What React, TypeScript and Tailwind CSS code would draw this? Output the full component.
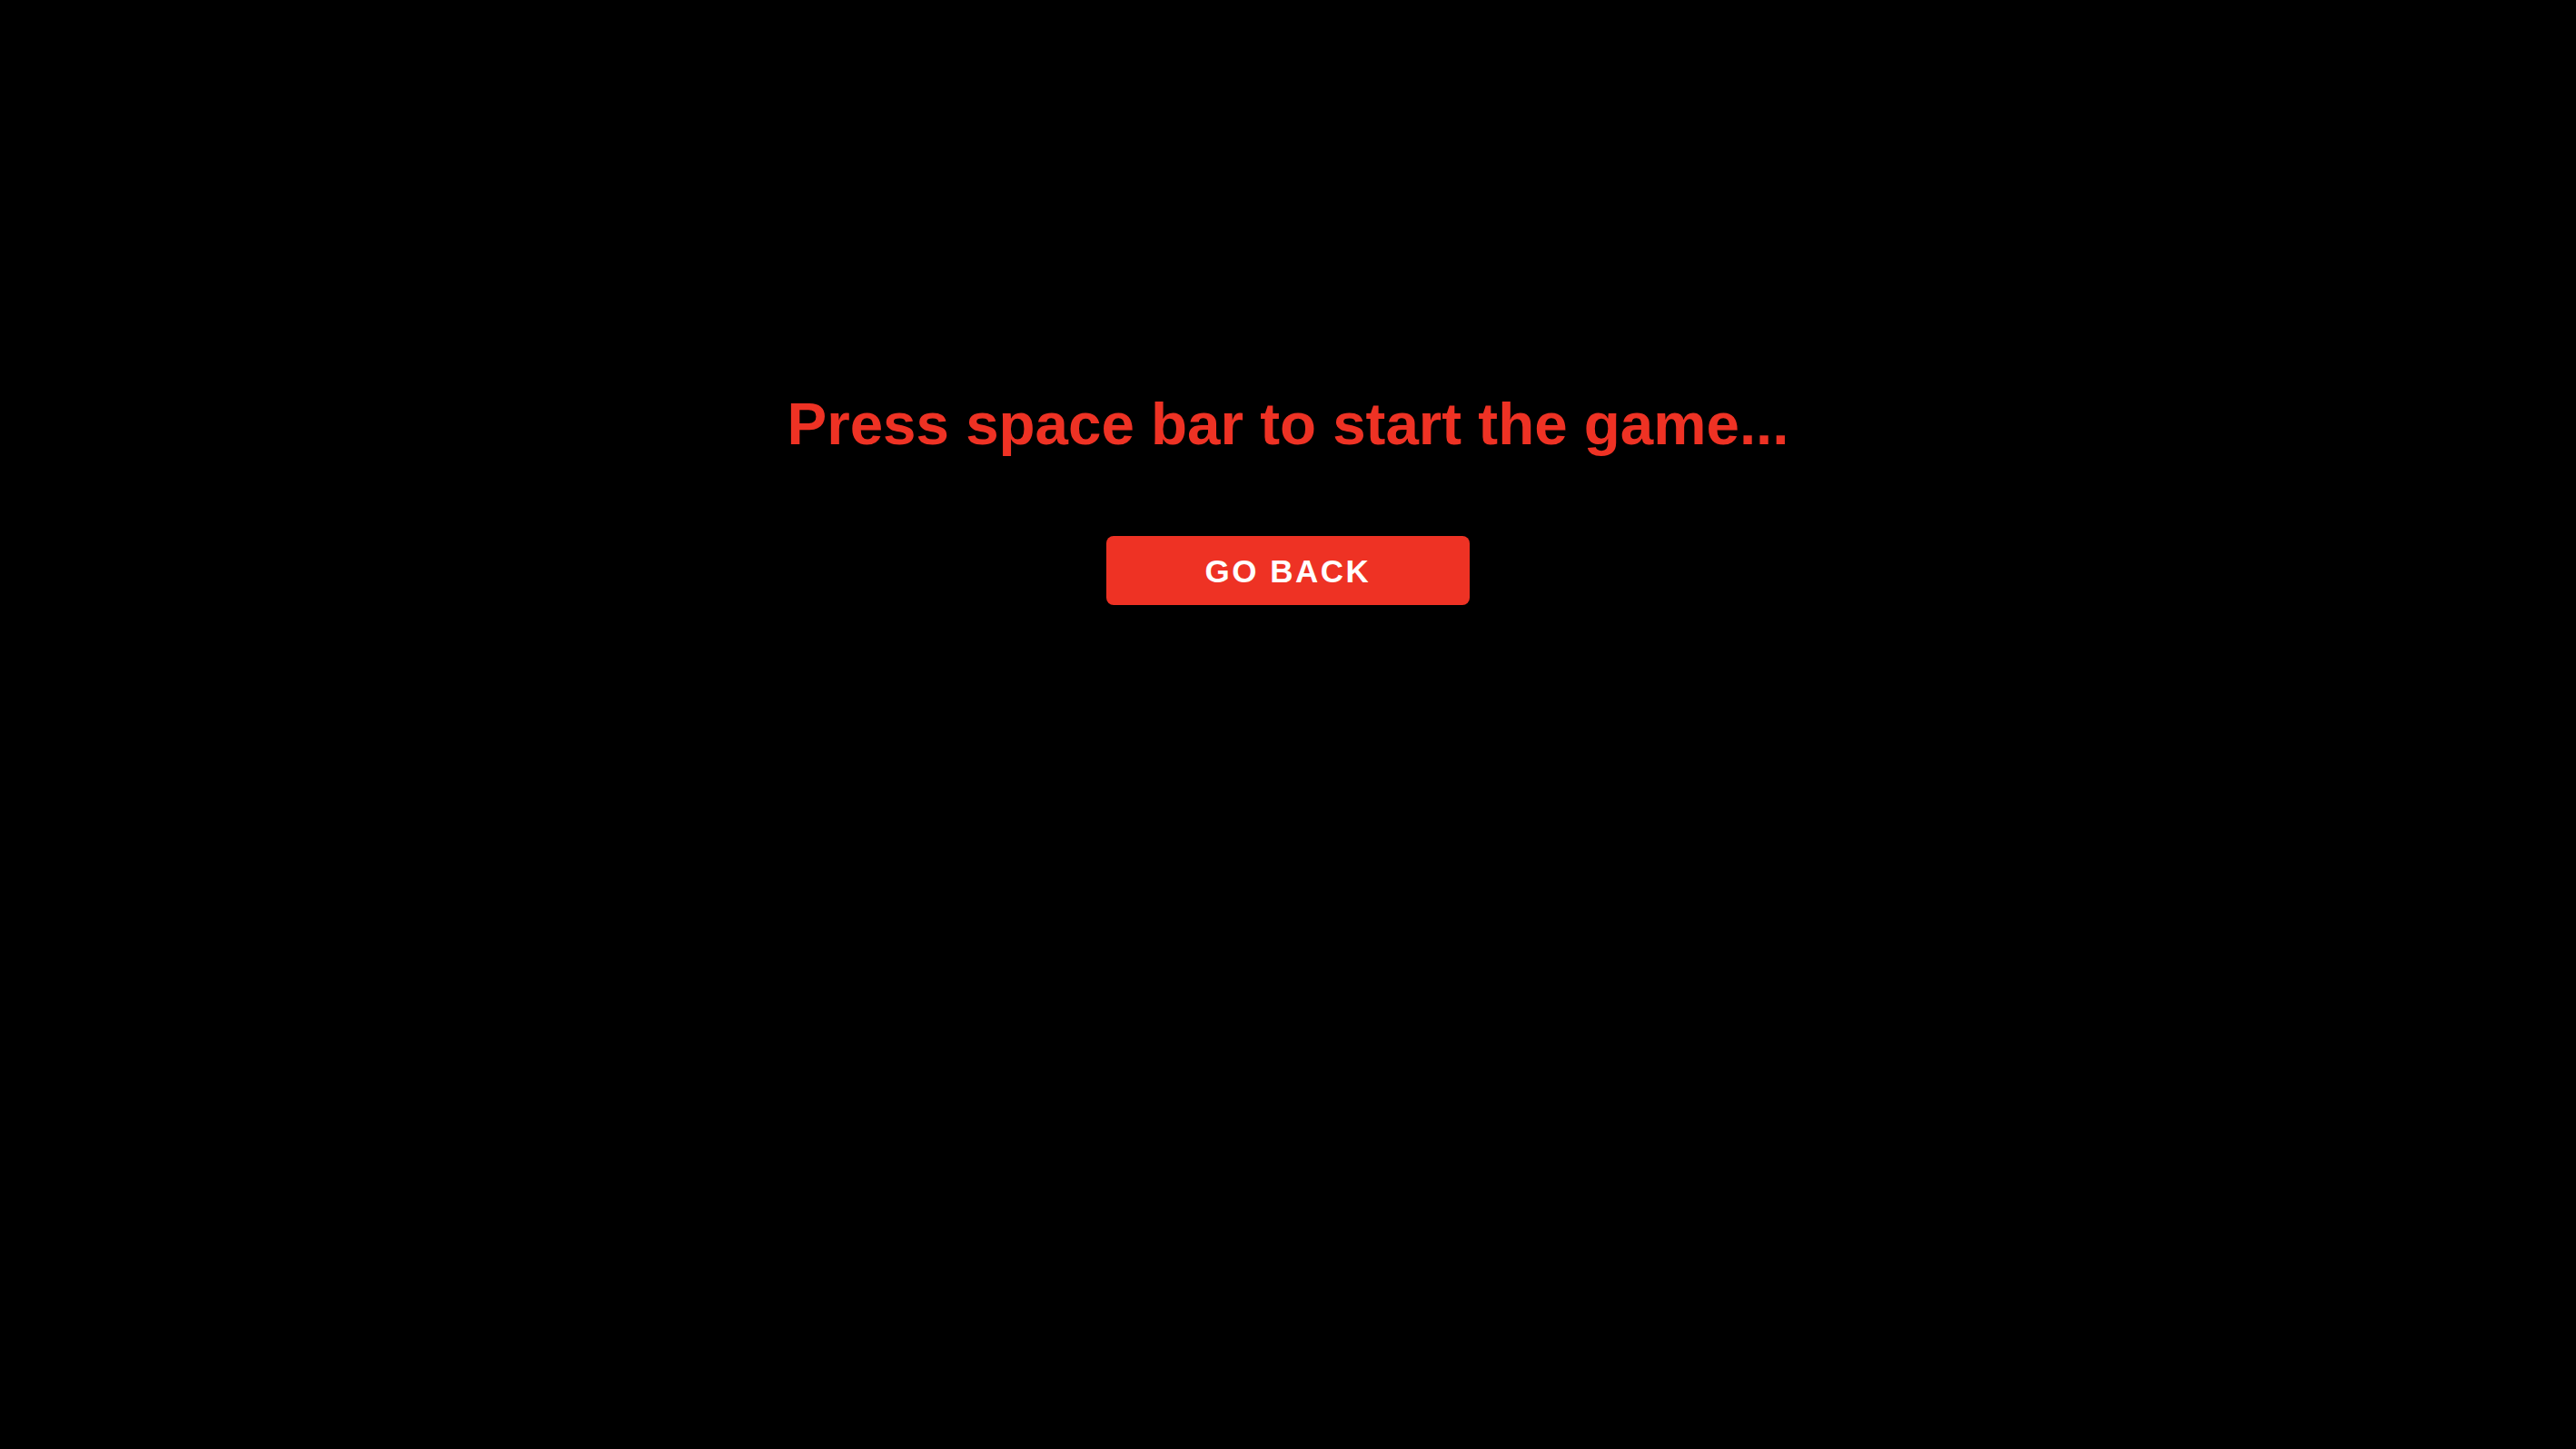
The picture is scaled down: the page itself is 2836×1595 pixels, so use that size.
const App = () => {
  return (
    <div
      className="min-h-screen w-full bg-black flex flex-col items-center pt-[434px]"
      style={{ fontFamily: '"Liberation Sans", Arial, sans-serif' }}
    >
      <h1 className="text-[65.5px] leading-[66px] font-bold text-[#ee3224]">
        Press space bar to start the game...
      </h1>
      <button className="mt-[90px] w-[400px] h-[76px] rounded-[8px] bg-[#ee3224] text-white text-[35px] leading-none font-bold tracking-[2.5px] uppercase flex items-center justify-center">
        Go Back
      </button>
    </div>
  );
};

export default App;
